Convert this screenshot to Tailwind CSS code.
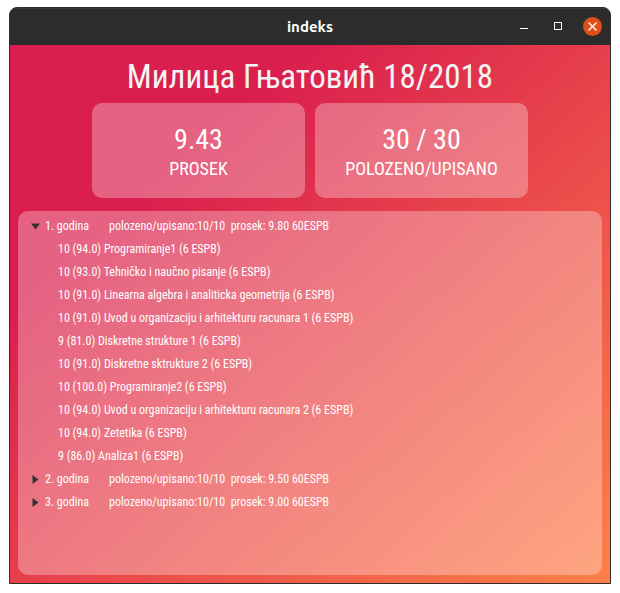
<!DOCTYPE html>
<html lang="sr">
<head>
<meta charset="utf-8">
<meta name="viewport" content="width=device-width, initial-scale=1">
<title>indeks</title>
<script src="https://cdn.jsdelivr.net/npm/@tailwindcss/browser@4"></script>
</head>
<body class="flex h-screen bg-white px-[9px] pt-[7px] pb-[9px] font-['Ubuntu_Condensed','Roboto_Condensed','Open_Sans_Condensed','Liberation_Sans_Narrow','Liberation_Sans',sans-serif] text-white">
<div class="flex flex-1 flex-col overflow-hidden rounded-t-lg border border-[#2f2c2c] bg-[#2c2c2c]">
  <header class="grid h-[37px] shrink-0 grid-cols-[1fr_auto_1fr] items-center border-t border-[#3a3a3a]">
    <h1 class="col-start-2 font-['Ubuntu','Noto_Sans',sans-serif] text-[15px] font-bold">indeks</h1>
    <div class="flex items-center justify-end gap-4 pr-2 pb-[2px]">
      <button type="button" aria-label="Minimize" class="size-[18px]"><svg viewBox="0 0 18 18" class="size-[18px]"><path d="M5 11.5h8" stroke="#fff"/></svg></button>
      <button type="button" aria-label="Maximize" class="size-[18px]"><svg viewBox="0 0 18 18" class="size-[18px]"><path d="M5.500 5.500h7v7h-7z" fill="none" stroke="#fff"/></svg></button>
      <button type="button" aria-label="Close" class="size-[19px] rounded-full bg-[#e04e19]"><svg viewBox="0 0 19 19" class="size-[19px]"><path d="M5.500 5.500l8 8M13.500 5.500l-8 8" stroke="#fff" stroke-width="1.400"/></svg></button>
    </div>
  </header>
  <main class="flex flex-1 flex-col bg-[linear-gradient(to_bottom_right,#da1f4e_25%,#ff8048_100%)] px-2 pt-2 pb-2">
    <h2 class="pb-[2px] text-center text-[33px] leading-[48px] text-[#f4f4f4]">Милица Гњатовић 18/2018</h2>
    <section class="mx-auto grid w-[436px] max-w-full grid-cols-2 gap-[10px] text-center">
      <div class="rounded-[10px] bg-white/30 pt-[19px] pb-[18px]">
        <p class="text-[28px] leading-9">9.43</p>
        <p class="text-lg leading-[22px]">PROSEK</p>
      </div>
      <div class="rounded-[10px] bg-white/30 pt-[19px] pb-[18px]">
        <p class="text-[28px] leading-9">30 / 30</p>
        <p class="text-lg leading-[22px]">POLOZENO/UPISANO</p>
      </div>
    </section>
    <section class="mt-[13px] flex-1 rounded-[10px] bg-white/30 px-[13px] py-1 text-xs leading-[23px]">
      <details open>
        <summary class="flex list-none items-center whitespace-pre"><svg viewBox="0 0 9 9" class="mr-[5px] size-[9px] rotate-90 fill-[#333]"><path d="M1.500 0l6 4.500-6 4.500z"/></svg><span class="w-16">1. godina</span><span>polozeno/upisano:10/10  prosek: 9.80 60ESPB</span></summary>
        <ul class="pl-[27px]">
          <li>10 (94.0) Programiranje1 (6 ESPB)</li>
          <li>10 (93.0) Tehničko i naučno pisanje (6 ESPB)</li>
          <li>10 (91.0) Linearna algebra i analiticka geometrija (6 ESPB)</li>
          <li>10 (91.0) Uvod u organizaciju i arhitekturu racunara 1 (6 ESPB)</li>
          <li>9 (81.0) Diskretne strukture 1 (6 ESPB)</li>
          <li>10 (91.0) Diskretne sktrukture 2 (6 ESPB)</li>
          <li>10 (100.0) Programiranje2 (6 ESPB)</li>
          <li>10 (94.0) Uvod u organizaciju i arhitekturu racunara 2 (6 ESPB)</li>
          <li>10 (94.0) Zetetika (6 ESPB)</li>
          <li>9 (86.0) Analiza1 (6 ESPB)</li>
        </ul>
      </details>
      <details>
        <summary class="flex list-none items-center whitespace-pre"><svg viewBox="0 0 9 9" class="mr-[5px] size-[9px] fill-[#333]"><path d="M1.500 0l6 4.500-6 4.500z"/></svg><span class="w-16">2. godina</span><span>polozeno/upisano:10/10  prosek: 9.50 60ESPB</span></summary>
      </details>
      <details>
        <summary class="flex list-none items-center whitespace-pre"><svg viewBox="0 0 9 9" class="mr-[5px] size-[9px] fill-[#333]"><path d="M1.500 0l6 4.500-6 4.500z"/></svg><span class="w-16">3. godina</span><span>polozeno/upisano:10/10  prosek: 9.00 60ESPB</span></summary>
      </details>
    </section>
  </main>
</div>
</body>
</html>
